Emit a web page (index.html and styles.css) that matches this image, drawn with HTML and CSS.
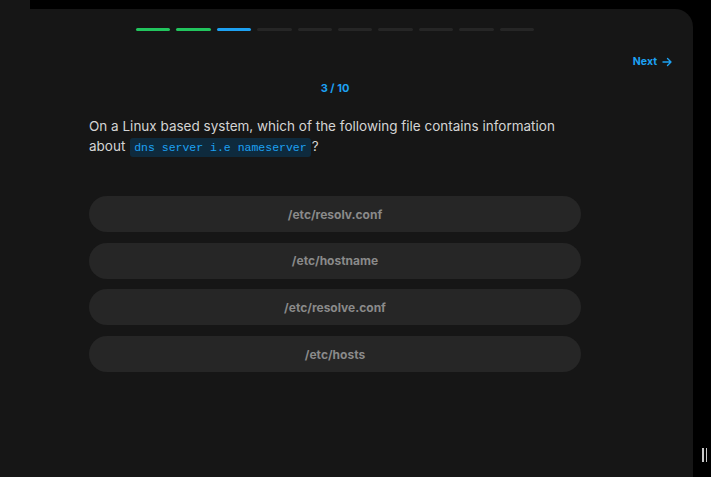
FILE: index.html
```html
<!DOCTYPE html>
<html>
<head>
<meta charset="utf-8">
<link rel="stylesheet" href="styles.css">
</head>
<body>
<div class="page">
  <div class="topstrip"><div class="strip-block"></div></div>
  <div class="card">
    <div class="inner">
      <div class="progress">
        <span class="seg done"></span>
        <span class="seg done"></span>
        <span class="seg current"></span>
        <span class="seg"></span>
        <span class="seg"></span>
        <span class="seg"></span>
        <span class="seg"></span>
        <span class="seg"></span>
        <span class="seg"></span>
        <span class="seg"></span>
      </div>
      <div class="nav">
        <a class="next">Next
          <svg width="10" height="10" viewBox="0 0 10 10" fill="none" stroke="currentColor" stroke-width="1.4" stroke-linecap="round" stroke-linejoin="round"><path d="M1 5h8M5.5 1.5 9 5l-3.5 3.5"/></svg>
        </a>
      </div>
      <div class="counter">3 / 10</div>
      <p class="question">On a Linux based system, which of the following file contains information about <code>dns server i.e nameserver</code>?</p>
      <div class="options">
        <button class="opt">/etc/resolv.conf</button>
        <button class="opt">/etc/hostname</button>
        <button class="opt">/etc/resolve.conf</button>
        <button class="opt">/etc/hosts</button>
      </div>
    </div>
  </div>
  <div class="handle"><span></span><span></span></div>
</div>
</body>
</html>
```

FILE: styles.css
```css
html, body {
  margin: 0;
  padding: 0;
  background: #000;
  height: 100%;
  overflow: hidden;
}
body {
  font-family: Inter, "Noto Sans", sans-serif;
}
.page {
  position: relative;
  height: 477px;
  display: flex;
  flex-direction: column;
}
.topstrip {
  height: 9px;
  display: flex;
}
.strip-block {
  width: 30px;
  background: #161616;
}
.card {
  flex: 1;
  width: 693px;
  background: #161616;
  border-radius: 0 18px 0 0;
  box-sizing: border-box;
}
.inner {
  width: 670px;
  display: flex;
  flex-direction: column;
  align-items: center;
}
.progress {
  margin-top: 19px;
  width: 398px;
  display: flex;
  gap: 6px;
}
.seg {
  flex: 1;
  height: 3px;
  border-radius: 2px;
  background: #262626;
}
.seg.done { background: #22c55e; }
.seg.current { background: #1da1f2; }
.nav {
  align-self: stretch;
  display: flex;
  justify-content: flex-end;
  margin-top: 24px;
}
.next {
  display: flex;
  align-items: center;
  gap: 5px;
  color: #1da1f2;
  font-size: 10.5px;
  font-weight: 700;
  line-height: 14px;
  margin-right: -2px;
}
.counter {
  margin-top: 12px;
  color: #1da1f2;
  font-size: 11px;
  font-weight: 700;
  line-height: 14px;
}
.question {
  align-self: stretch;
  margin: 21px 89px 0;
  color: #d4d4d4;
  font-size: 13.5px;
  line-height: 20px;
}
.question code {
  font-family: "Liberation Mono", "DejaVu Sans Mono", monospace;
  font-size: 11.5px;
  color: #1da1f2;
  background: #0e2a3d;
  padding: 3px 4px;
  border-radius: 3px;
  margin-left: 1px;
  margin-right: 1px;
}
.options {
  align-self: stretch;
  margin: 38px 89px 0;
  display: flex;
  flex-direction: column;
  gap: 10.7px;
}
.opt {
  height: 36px;
  border: 0;
  border-radius: 18px;
  background: #262626;
  color: #8a8a8a;
  font-family: Inter, "Noto Sans", sans-serif;
  font-size: 12px;
  font-weight: 700;
  padding: 0;
}
.handle {
  position: absolute;
  left: 702px;
  top: 448px;
  display: flex;
  gap: 2px;
}
.handle span {
  width: 1.5px;
  height: 14px;
  background: #c8c8c8;
}
```
